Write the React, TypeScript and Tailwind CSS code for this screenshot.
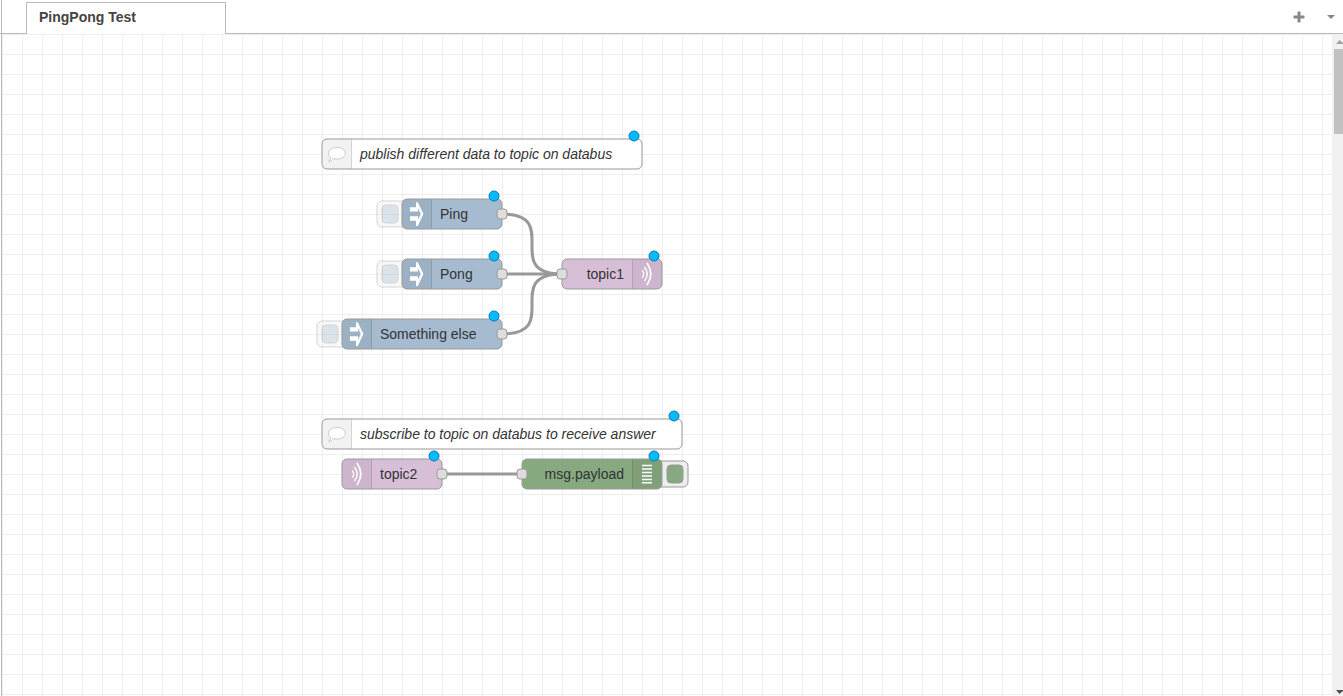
import React from "react";

type Kind = "comment" | "inject" | "bus" | "debug";
type FlowNode = {
  label: string;
  x: number;
  y: number;
  w: number;
  kind: Kind;
  iconRight?: boolean;
  input?: boolean;
  output?: boolean;
  button?: "left" | "right";
};

const nodes: FlowNode[] = [
  { label: "publish different data to topic on databus", x: 320, y: 105, w: 320, kind: "comment" },
  { label: "Ping", x: 400, y: 165, w: 100, kind: "inject", output: true, button: "left" },
  { label: "Pong", x: 400, y: 225, w: 100, kind: "inject", output: true, button: "left" },
  { label: "Something else", x: 340, y: 285, w: 160, kind: "inject", output: true, button: "left" },
  { label: "topic1", x: 560, y: 225, w: 100, kind: "bus", iconRight: true, input: true },
  { label: "subscribe to topic on databus to receive answer", x: 320, y: 385, w: 360, kind: "comment" },
  { label: "topic2", x: 340, y: 425, w: 100, kind: "bus", output: true },
  { label: "msg.payload", x: 520, y: 425, w: 140, kind: "debug", iconRight: true, input: true, button: "right" },
];

const wires = [
  "M500 180 C561 180 499 240 560 240",
  "M500 240 H560",
  "M500 300 C561 300 499 240 560 240",
  "M440 440 H520",
];

const fills: Record<Kind, string> = {
  comment: "#ffffff",
  inject: "#a6bbcf",
  bus: "#d8bfd8",
  debug: "#87a980",
};

function KindIcon({ kind }: { kind: Kind }) {
  if (kind === "comment") {
    return (
      <path
        d="M15 8.500c4.700 0 8.300 2.500 8.300 5.800s-3.600 5.700-8.300 5.700c-1.300 0-2.500-.2-3.600-.5-1.200 1.700-2.700 2.900-4.700 3.300 1-1.200 1.700-2.600 2-4.400C7.300 17.400 6.500 16 6.500 14.300c0-3.300 3.800-5.800 8.500-5.800z"
        fill="#fff"
        stroke="#c4c4c4"
        strokeWidth="0.9"
      />
    );
  }
  if (kind === "inject") {
    return (
      <path
        fillRule="evenodd"
        fill="#fff"
        d="M8 8.300h6V3.300h1.800L21.400 15 15.800 27H14v-5.300H8v-4.400h8v3.400L18.800 15 16 9v3.500H8z"
      />
    );
  }
  if (kind === "bus") {
    return (
      <g fill="none" stroke="#fff" strokeLinecap="round">
        <path d="M10.500 11.800q2.400 3.200 0 6.400" strokeWidth="1.300" />
        <path d="M12.800 8.500q4.800 6.500 0 13" strokeWidth="1.500" />
        <path d="M15.300 4.500q7 10.500 0 21" strokeWidth="1.700" />
      </g>
    );
  }
  return (
    <path
      d="M10 6.500h10M10 10h10M10 13.500h10M10 17h10M10 20.400h10M10 23.800h10"
      stroke="#fff"
      strokeWidth="1.500"
    />
  );
}

function NodeButton({ node }: { node: FlowNode }) {
  const left = node.button === "left";
  return (
    <button
      type="button"
      aria-label={`Trigger ${node.label}`}
      className={`absolute top-[2px] h-[26px] w-8 ${left ? "-left-[25px] opacity-40" : "-right-[26px]"}`}
    >
      <svg viewBox="0 0 32 26" className="block h-[26px] w-8 overflow-visible" aria-hidden="true">
        <rect width="32" height="26" rx="5" fill="#eee" stroke="#999" />
        <rect x={left ? 5 : 11} y="4" width="16" height="18" rx="4" fill={fills[node.kind]} stroke="#999" />
      </svg>
    </button>
  );
}

function CanvasNode({ node }: { node: FlowNode }) {
  const { w, kind, iconRight } = node;
  const clipId = `body-${node.x}-${node.y}`;
  return (
    <div className="absolute h-[30px]" style={{ left: node.x, top: node.y, width: w }}>
      {node.button && <NodeButton node={node} />}
      <svg className="absolute inset-0 h-full w-full overflow-visible" aria-hidden="true">
        <clipPath id={clipId}>
          <rect width={w} height="30" rx="5" />
        </clipPath>
        <rect width={w} height="30" rx="5" fill={fills[kind]} />
        <g clipPath={`url(#${clipId})`}>
          <rect x={iconRight ? w - 30 : 0} width="30" height="30" fill="#000" fillOpacity="0.05" />
          <path d={`M${iconRight ? w - 29.5 : 29.5} 0V30`} stroke="#000" strokeOpacity="0.12" />
        </g>
        <rect width={w} height="30" rx="5" fill="none" stroke="#999" />
        <g transform={`translate(${iconRight ? w - 30 : 0} 0)`}>
          <KindIcon kind={kind} />
        </g>
        {node.input && <rect x="-5" y="10" width="10" height="10" rx="3" fill="#ddd" stroke="#999" />}
        {node.output && <rect x={w - 5} y="10" width="10" height="10" rx="3" fill="#ddd" stroke="#999" />}
        <circle cx={w - 8} cy="-3" r="5" fill="#00bcff" stroke="#0b7ab3" />
      </svg>
      <span
        className={`relative block text-[14px] leading-[30px] whitespace-nowrap ${
          iconRight ? "pr-[38px] text-right" : "pl-[38px]"
        } ${kind === "comment" ? "italic" : ""}`}
      >
        {node.label}
      </span>
    </div>
  );
}

export default function App() {
  return (
    <div className="flex h-screen flex-col overflow-hidden bg-white font-['Liberation_Sans',Arial,sans-serif] text-[14px] text-[#333]">
      <header className="flex h-[34px] shrink-0 border-b border-[#bbb] pl-px">
        <nav className="flex border-l border-[#bbb] pl-6">
          <a
            href="#flow"
            className="mt-[2px] -mb-px block w-[200px] border border-b-0 border-[#bbb] bg-white px-3 leading-[29px] font-bold text-[#444]"
          >
            PingPong Test
          </a>
        </nav>
        <div className="ml-auto flex items-center">
          <button type="button" aria-label="Add flow" className="flex h-full w-10 items-center justify-center">
            <svg viewBox="0 0 12 12" className="h-3 w-3" aria-hidden="true">
              <path
                d="M5.200 .5h1.600q.7 0 .7.700v3.300h3.300q.7 0 .7.700v1.600q0 .7-.7.700H7.500v3.300q0 .7-.7.700H5.200q-.7 0-.7-.7V7.500H1.200q-.7 0-.7-.7V5.200q0-.7.7-.7h3.300V1.200q0-.7.7-.7z"
                fill="#888"
              />
            </svg>
          </button>
          <button type="button" aria-label="List flows" className="flex h-full w-6 items-center justify-center">
            <svg viewBox="0 0 8 4" className="h-1 w-2" aria-hidden="true">
              <path d="M0 0h8L4 4z" fill="#888" />
            </svg>
          </button>
        </div>
      </header>
      <div className="flex min-h-0 flex-1 pl-px">
        <main className="relative min-w-0 flex-1 overflow-hidden border-l border-[#bbb] bg-[linear-gradient(#eee_1px,transparent_1px),linear-gradient(90deg,#eee_1px,transparent_1px)] bg-[size:20px_20px]">
          <svg className="absolute inset-0 h-full w-full" aria-hidden="true">
            {wires.map((d) => (
              <path key={d} d={d} fill="none" stroke="#999" strokeWidth="3" />
            ))}
          </svg>
          {nodes.map((node) => (
            <CanvasNode key={node.label} node={node} />
          ))}
        </main>
        <div className="flex w-[11px] shrink-0 flex-col items-end bg-[#f1f1f1]" aria-hidden="true">
          <svg viewBox="0 0 9 15" className="h-[15px] w-[9px]">
            <path d="M2 10h7V9L5.500 6z" fill="#a3a3a3" />
          </svg>
          <div className="h-[85px] w-[9px] bg-[#c1c1c1]" />
          <svg viewBox="0 0 9 8" className="mt-auto h-2 w-[9px]">
            <path d="M2 2h7v1L5.500 6z" fill="#505050" />
          </svg>
        </div>
      </div>
    </div>
  );
}
